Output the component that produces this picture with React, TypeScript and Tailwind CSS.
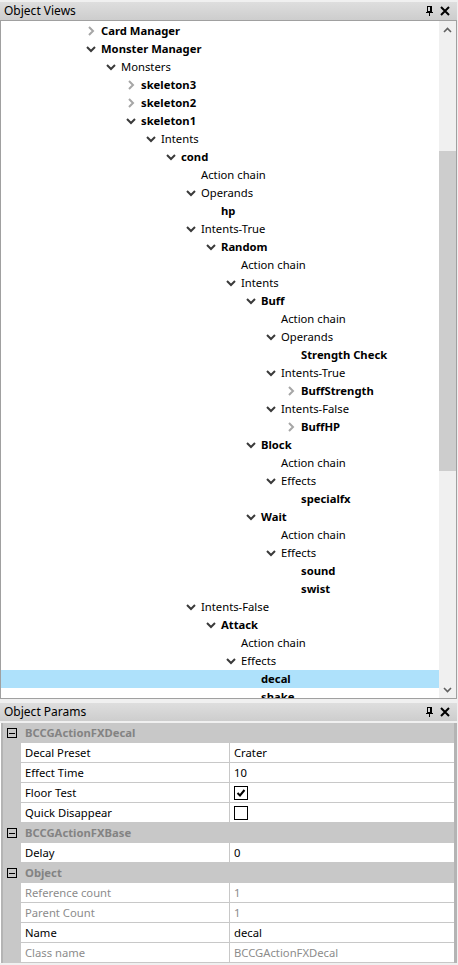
import React from "react";

type Node = { label: string; level: number; bold?: boolean; chevron?: "open" | "closed"; selected?: boolean };

const tree: Node[] = [
  { label: "Card Manager", level: 0, bold: true, chevron: "closed" },
  { label: "Monster Manager", level: 0, bold: true, chevron: "open" },
  { label: "Monsters", level: 1, chevron: "open" },
  { label: "skeleton3", level: 2, bold: true, chevron: "closed" },
  { label: "skeleton2", level: 2, bold: true, chevron: "closed" },
  { label: "skeleton1", level: 2, bold: true, chevron: "open" },
  { label: "Intents", level: 3, chevron: "open" },
  { label: "cond", level: 4, bold: true, chevron: "open" },
  { label: "Action chain", level: 5 },
  { label: "Operands", level: 5, chevron: "open" },
  { label: "hp", level: 6, bold: true },
  { label: "Intents-True", level: 5, chevron: "open" },
  { label: "Random", level: 6, bold: true, chevron: "open" },
  { label: "Action chain", level: 7 },
  { label: "Intents", level: 7, chevron: "open" },
  { label: "Buff", level: 8, bold: true, chevron: "open" },
  { label: "Action chain", level: 9 },
  { label: "Operands", level: 9, chevron: "open" },
  { label: "Strength Check", level: 10, bold: true },
  { label: "Intents-True", level: 9, chevron: "open" },
  { label: "BuffStrength", level: 10, bold: true, chevron: "closed" },
  { label: "Intents-False", level: 9, chevron: "open" },
  { label: "BuffHP", level: 10, bold: true, chevron: "closed" },
  { label: "Block", level: 8, bold: true, chevron: "open" },
  { label: "Action chain", level: 9 },
  { label: "Effects", level: 9, chevron: "open" },
  { label: "specialfx", level: 10, bold: true },
  { label: "Wait", level: 8, bold: true, chevron: "open" },
  { label: "Action chain", level: 9 },
  { label: "Effects", level: 9, chevron: "open" },
  { label: "sound", level: 10, bold: true },
  { label: "swist", level: 10, bold: true },
  { label: "Intents-False", level: 5, chevron: "open" },
  { label: "Attack", level: 6, bold: true, chevron: "open" },
  { label: "Action chain", level: 7 },
  { label: "Effects", level: 7, chevron: "open" },
  { label: "decal", level: 8, bold: true, selected: true },
  { label: "shake", level: 8, bold: true },
];

function Chevron({ kind }: { kind: "open" | "closed" }) {
  if (kind === "open") {
    return (
      <svg width="16" height="18" viewBox="0 0 16 18">
        <path d="M4 7 L8 11 L12 7" fill="none" stroke="#3a3a3a" strokeWidth="2" />
      </svg>
    );
  }
  return (
    <svg width="16" height="18" viewBox="0 0 16 18">
      <path d="M6 5 L10 9 L6 13" fill="none" stroke="#a6a6a6" strokeWidth="2" />
    </svg>
  );
}

function PinIcon() {
  return (
    <svg width="9" height="10" viewBox="0 0 9 10" shapeRendering="crispEdges">
      <rect x="2.5" y="0.5" width="3" height="5" fill="none" stroke="#000" />
      <rect x="5" y="0" width="2" height="6" fill="#000" />
      <rect x="1" y="6" width="7" height="1" fill="#000" />
      <rect x="4" y="7" width="1" height="3" fill="#000" />
    </svg>
  );
}

function CloseIcon() {
  return (
    <svg width="10" height="10" viewBox="0 0 10 10">
      <path d="M1 1 L9 9 M9 1 L1 9" stroke="#000" strokeWidth="2" />
    </svg>
  );
}

function PanelHeader({ title }: { title: string }) {
  return (
    <div className="h-[18px] flex items-center justify-between pl-[4px] pr-[7px] bg-[linear-gradient(to_bottom,#dedede,#cdcdcd)] text-[12px] text-black">
      <span className="leading-none">{title}</span>
      <div className="flex items-center gap-[6px]">
        <PinIcon />
        <CloseIcon />
      </div>
    </div>
  );
}

function ScrollArrow({ dir }: { dir: "up" | "down" }) {
  return (
    <div className="h-[17px] flex items-center justify-center">
      <svg width="9" height="6" viewBox="0 0 9 6">
        <path d={dir === "up" ? "M1 5 L4.5 1.5 L8 5" : "M1 1 L4.5 4.5 L8 1"} fill="none" stroke="#606060" strokeWidth="1.6" />
      </svg>
    </div>
  );
}

function MinusBox() {
  return (
    <div className="w-[10px] h-[10px] border border-black flex items-center justify-center bg-transparent">
      <div className="w-[6px] h-px bg-black" />
    </div>
  );
}

function Checkbox({ checked }: { checked: boolean }) {
  return (
    <div className="w-[14px] h-[14px] border border-black bg-white flex items-center justify-center">
      {checked && (
        <svg width="10" height="10" viewBox="0 0 10 10">
          <path d="M1.5 5 L4 7.5 L8.5 2" fill="none" stroke="#000" strokeWidth="2" />
        </svg>
      )}
    </div>
  );
}

type Row =
  | { kind: "cat"; title: string }
  | { kind: "prop"; label: string; value?: string; check?: boolean; disabled?: boolean };

const rows: Row[] = [
  { kind: "cat", title: "BCCGActionFXDecal" },
  { kind: "prop", label: "Decal Preset", value: "Crater" },
  { kind: "prop", label: "Effect Time", value: "10" },
  { kind: "prop", label: "Floor Test", check: true },
  { kind: "prop", label: "Quick Disappear", check: false },
  { kind: "cat", title: "BCCGActionFXBase" },
  { kind: "prop", label: "Delay", value: "0" },
  { kind: "cat", title: "Object" },
  { kind: "prop", label: "Reference count", value: "1", disabled: true },
  { kind: "prop", label: "Parent Count", value: "1", disabled: true },
  { kind: "prop", label: "Name", value: "decal" },
  { kind: "prop", label: "Class name", value: "BCCGActionFXDecal", disabled: true },
];

export default function App() {
  return (
    <div
      className="w-[458px] h-[965px] bg-[#f0f0f0] overflow-hidden flex flex-col text-[11.25px] text-black"
      style={{ fontFamily: '"Noto Sans", "Open Sans", sans-serif' }}
    >
      {/* Object Views */}
      <div className="pt-[2px] pr-[1px]">
        <PanelHeader title="Object Views" />
        <div className="h-[679px] border border-[#a0a0a0] bg-white flex">
          <div className="flex-1 overflow-hidden pt-[1px]">
            {tree.map((n, i) => (
              <div
                key={i}
                className={`h-[18px] flex items-center ${n.selected ? "bg-[#aee1fb]" : ""}`}
                style={{ paddingLeft: 82 + 20 * n.level }}
              >
                <div className="w-[16px] h-[18px] shrink-0">{n.chevron && <Chevron kind={n.chevron} />}</div>
                <span className={`ml-[2px] whitespace-nowrap leading-none ${n.bold ? "font-bold" : ""}`}>{n.label}</span>
              </div>
            ))}
          </div>
          <div className="w-[17px] bg-[#f0f0f0] flex flex-col">
            <ScrollArrow dir="up" />
            <div className="flex-1 flex flex-col">
              <div className="h-[113px]" />
              <div className="h-[320px] bg-[#cdcdcd]" />
              <div className="flex-1" />
            </div>
            <ScrollArrow dir="down" />
          </div>
        </div>
      </div>

      {/* Object Params */}
      <div className="mt-[4px] pr-[1px] flex flex-col">
        <PanelHeader title="Object Params" />
        <div className="mt-[2px] border-l border-[#ffffff] flex">
          <div className="w-[2px] bg-[#b4b4b4]" />
          <div className="flex-1 flex flex-col">
            {rows.map((r, i) =>
              r.kind === "cat" ? (
                <div key={i} className="h-[20px] flex items-center bg-[#c8c8c8]">
                  <div className="w-[18px] flex justify-center">
                    <MinusBox />
                  </div>
                  <span className="ml-[4px] font-bold text-[#838383] leading-none">{r.title}</span>
                </div>
              ) : (
                <div key={i} className="h-[20px] flex bg-[#c8c8c8]">
                  <div className="w-[18px]" />
                  <div className="w-[208px] bg-white border-b border-[#c8c8c8] flex items-center pl-[4px]">
                    <span className={`leading-none ${r.disabled ? "text-[#8c8c8c]" : "text-black"}`}>{r.label}</span>
                  </div>
                  <div className="w-px bg-[#c8c8c8]" />
                  <div className="flex-1 bg-white border-b border-[#c8c8c8] flex items-center pl-[4px]">
                    {r.check !== undefined ? (
                      <Checkbox checked={r.check} />
                    ) : (
                      <span className={`leading-none ${r.disabled ? "text-[#8c8c8c]" : "text-black"}`}>{r.value}</span>
                    )}
                  </div>
                </div>
              )
            )}
          </div>
          <div className="w-[3px] bg-[#b4b4b4]" />
        </div>
      </div>
    </div>
  );
}
